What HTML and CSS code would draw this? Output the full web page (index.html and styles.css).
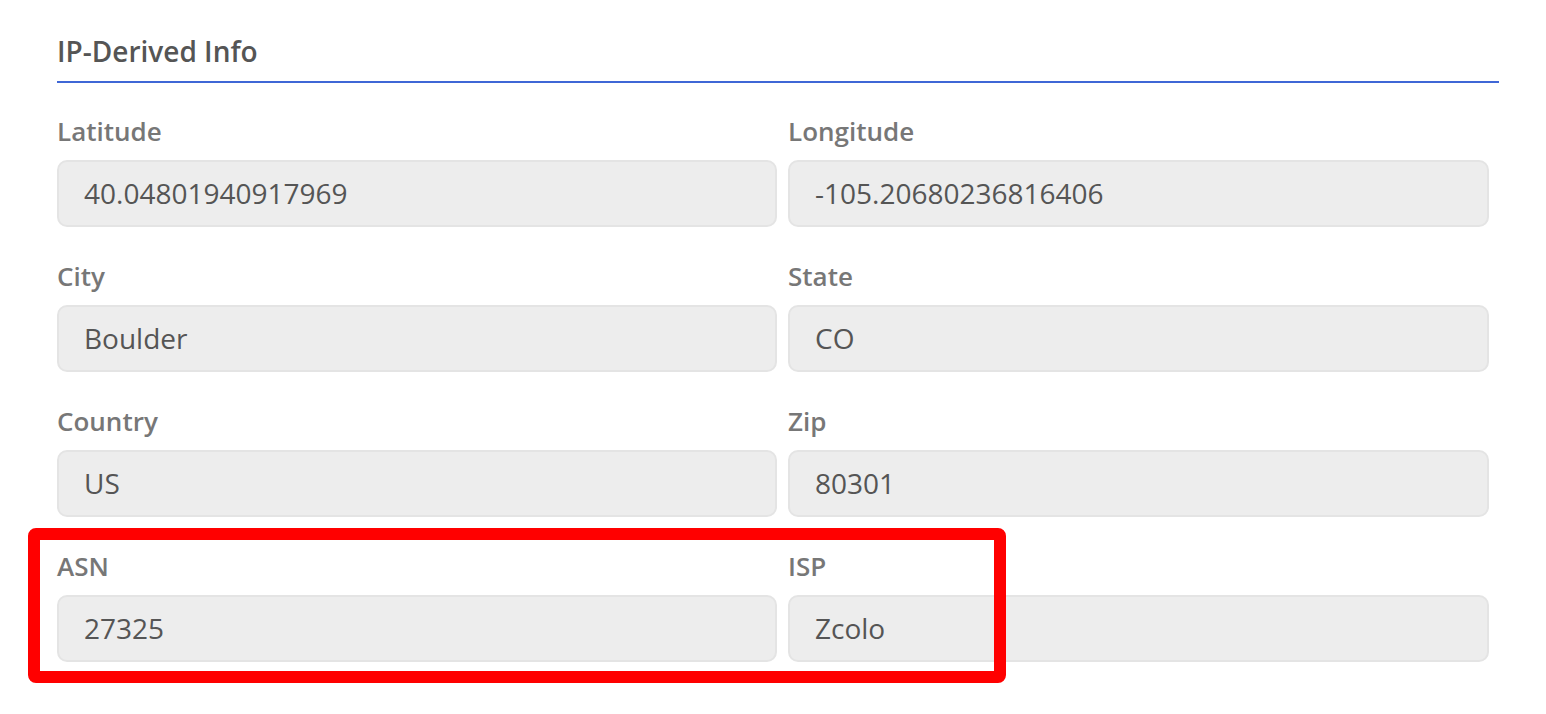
FILE: index.html
```html
<!DOCTYPE html>
<html>
<head>
<meta charset="utf-8">
<link rel="stylesheet" href="styles.css">
</head>
<body>
<section class="panel">
  <h2 class="panel-title">IP-Derived Info</h2>
  <div class="fields">
    <div class="field"><label class="field-label">Latitude</label><div class="field-input">40.04801940917969</div></div>
    <div class="field"><label class="field-label">Longitude</label><div class="field-input">-105.20680236816406</div></div>
    <div class="field"><label class="field-label">City</label><div class="field-input">Boulder</div></div>
    <div class="field"><label class="field-label">State</label><div class="field-input">CO</div></div>
    <div class="field"><label class="field-label">Country</label><div class="field-input">US</div></div>
    <div class="field"><label class="field-label">Zip</label><div class="field-input">80301</div></div>
    <div class="field"><label class="field-label">ASN</label><div class="field-input">27325</div></div>
    <div class="field"><label class="field-label">ISP</label><div class="field-input">Zcolo</div></div>
  </div>
  <div class="highlight"></div>
</section>
</body>
</html>
```

FILE: styles.css
```css
* { box-sizing: border-box; }
html, body { margin: 0; padding: 0; background: #fff; }
body { font-family: "Open Sans", "Liberation Sans", sans-serif; }

.panel {
  position: relative;
  width: 1546px;
  height: 714px;
  padding: 32px 47px 0 57px;
}

.panel-title {
  margin: 0;
  font-size: 28px;
  font-weight: 600;
  color: #555;
  line-height: 38px;
  padding-bottom: 11px;
  border-bottom: 2px solid #3f67d6;
}

.fields {
  display: grid;
  grid-template-columns: 720px 701px;
  column-gap: 11px;
  row-gap: 34px;
  margin-top: 33px;
}

.field { display: flex; flex-direction: column; }

.field-label {
  font-size: 26px;
  font-weight: 600;
  color: #777;
  line-height: 30px;
  margin-bottom: 14px;
}

.field-input {
  height: 67px;
  background: #ededed;
  border: 2px solid #e4e4e4;
  border-radius: 10px;
  padding-left: 25px;
  font-size: 28px;
  line-height: 63px;
  color: #555;
}

.highlight {
  position: absolute;
  left: 28px;
  top: 528px;
  width: 978px;
  height: 155px;
  border: 12px solid #ff0000;
  border-radius: 8px;
}
```
